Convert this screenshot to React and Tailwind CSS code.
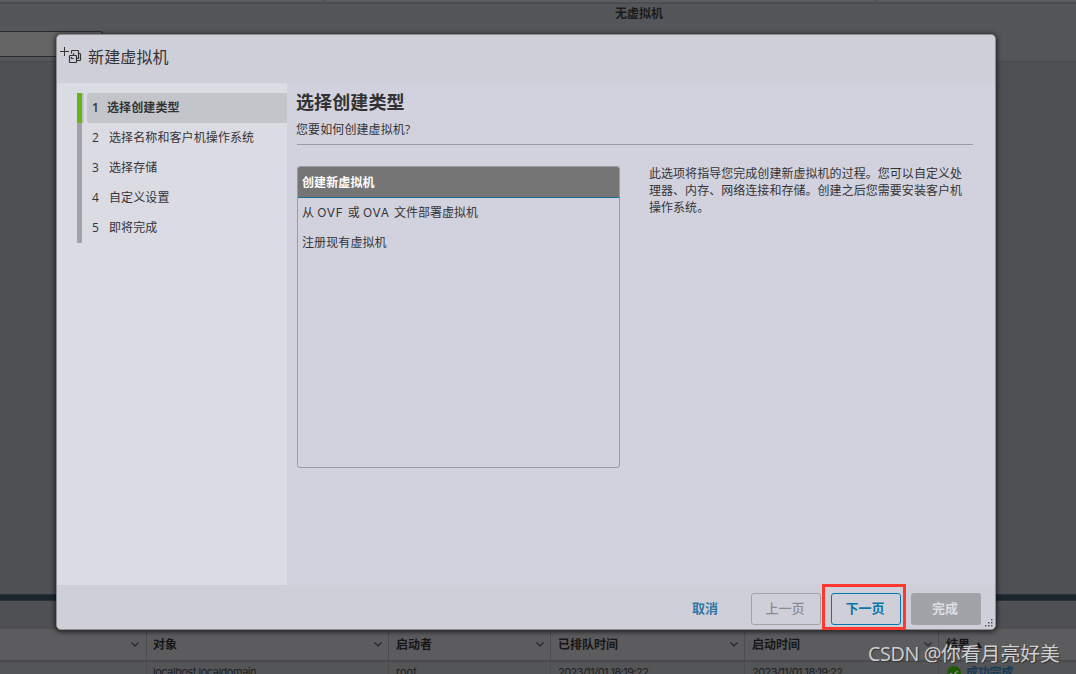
import React from 'react';

const steps = ['选择创建类型', '选择名称和客户机操作系统', '选择存储', '自定义设置', '即将完成'];

function Chevron() {
  return (
    <svg width="8" height="5" viewBox="0 0 8 5" className="shrink-0" fill="none" stroke="#252527" strokeWidth="1.1">
      <path d="M.5.5 4 4 7.500.5" />
    </svg>
  );
}

function HeaderCell({ label, className }) {
  return (
    <div className={`flex shrink-0 items-center justify-between border-r border-[#4d4d50] pr-[6px] text-[12px] font-bold text-[#161617] ${className}`}>
      <span>{label}</span>
      <Chevron />
    </div>
  );
}

function Cell({ children, className }) {
  return <div className={`shrink-0 border-r border-[#4d4d50] pt-[1px] font-[Inter] text-[11px] text-[#202022] ${className}`}>{children}</div>;
}

function Background() {
  return (
    <div className="flex h-[674px] w-[1076px] flex-col bg-[#4f5054]">
      <div className="flex h-[4px] shrink-0 border-b-2 border-[#4c4d51] bg-[#5b5c5f]">
        <div className="w-[324px] border-r border-[#49494d]" />
        <div className="w-[553px] border-r border-[#49494d]" />
      </div>
      <div className="flex h-[58px] shrink-0 flex-col border-b border-[#48494c] bg-[#555659]">
        <div className="flex h-[27px] shrink-0 pl-[615px] pt-[1px] text-[12px] font-bold leading-[18px] text-[#1b1b1c]">无虚拟机</div>
        <div className="h-[26px] w-[103px] shrink-0 rounded-tr-[3px] border border-l-0 border-[#2b2b2d] bg-[#656565]" />
      </div>
      <div className="h-[532px] shrink-0" />
      <div className="h-[7px] shrink-0 border-y border-[#29343a] bg-[#1a262c]" />
      <div className="h-[28px] shrink-0" />
      <div className="flex h-[33px] shrink-0 border-b-2 border-[#4b4b4d] bg-[#5c5c5e]">
        <HeaderCell label="" className="w-[147px] pr-[7px]" />
        <HeaderCell label="对象" className="w-[242px] pl-[6px]" />
        <HeaderCell label="启动者" className="w-[162px] pl-[7px]" />
        <HeaderCell label="已排队时间" className="w-[194px] pl-[7px]" />
        <HeaderCell label="启动时间" className="w-[194px] pl-[7px]" />
        <div className="flex items-center gap-[5px] pl-[7px] text-[12px] font-bold text-[#161617]">
          <span>结果</span>
          <svg width="7" height="6" viewBox="0 0 7 6"><path d="M3.500 0 7 6H0z" fill="#151516" /></svg>
        </div>
      </div>
      <div className="flex h-[12px] shrink-0 overflow-hidden bg-[#545557] leading-[18px]">
        <Cell className="w-[147px]" />
        <Cell className="w-[242px] pl-[6px] tracking-[-0.470px]">localhost.localdomain</Cell>
        <Cell className="w-[162px] pl-[7px]">root</Cell>
        <Cell className="w-[194px] pl-[7px] tracking-[-0.550px]">2023/11/01 18:19:22</Cell>
        <Cell className="w-[194px] pl-[7px] tracking-[-0.550px]">2023/11/01 18:19:22</Cell>
        <div className="flex items-start gap-[5px] pl-[8px] pt-[4px] text-[12px] font-bold text-[#173c57]">
          <svg width="14" height="14" viewBox="0 0 14 14" className="shrink-0">
            <circle cx="7" cy="7" r="7" fill="#1f5a08" />
            <path d="m3.500 7 2.500 2.500 4.500-4.500" fill="none" stroke="#8a908a" strokeWidth="1.300" />
          </svg>
          <span className="leading-[13px] tracking-[-0.200px]">成功完成</span>
        </div>
      </div>
    </div>
  );
}

function NewVmIcon() {
  return (
    <svg width="22" height="17" viewBox="0 0 22 17" className="shrink-0 overflow-visible" fill="none" stroke="#333336" strokeWidth="1.200">
      <path d="M-1 5.500h9M3.500 1v9" strokeWidth="1" />
      <rect x="8.500" y="9.500" width="7" height="7" rx="0.800" />
      <path d="M10.500 7.500V5.300c0-.5.300-.8.800-.8h5.400c.5 0 .8.300.8.800V12.500h-2M10.500 11v1.500h2" />
      <path d="M12.500 9V8.300c0-.5.300-.8.800-.8M17.500 7.500h1.200c.5 0 .8.300.8.800v5.400c0 .5-.3.800-.8.800h-3" />
    </svg>
  );
}

function Dialog() {
  return (
    <section className="absolute left-[56px] top-[34px] flex h-[596px] w-[940px] flex-col overflow-hidden rounded-[5px] border border-[#8e8e90] bg-[#d2d2de] shadow-[0_1px_5px_1px_rgba(0,0,0,0.650)]">
      <header className="flex h-[48px] shrink-0 items-start gap-[5px] bg-[#cfcfd9] pl-[4px] pt-[11px] text-[16px] leading-[23px] text-[#333335]">
        <NewVmIcon />
        <h1 className="tracking-[0.150px]">新建虚拟机</h1>
      </header>
      <div className="flex h-[502px] shrink-0">
        <aside className="w-[230px] shrink-0 bg-[#dbdbe4] pl-[20px] pt-[10px]">
          <ol className="text-[12px] text-[#343436]">
            {steps.map((label, index) => (
              <li key={label} className="flex h-[30px]">
                <div className={index === 0 ? 'w-[7px] border-l-[5px] border-[#62b515] bg-[#c2c2ca]' : 'w-[5px] bg-[#a2a2a7]'} />
                <div className={index === 0 ? 'ml-[3px] flex flex-1 items-center rounded-l-[3px] bg-[#c4c5ca] pl-[5px] font-bold' : 'ml-[5px] flex flex-1 items-center pl-[5px]'}>
                  <span className={index === 0 ? 'w-[15px] font-semibold' : 'w-[17px]'}>{index + 1}</span>
                  <span className="tracking-[0.100px]">{label}</span>
                </div>
              </li>
            ))}
          </ol>
        </aside>
        <main className="flex flex-1 flex-col pl-[10px] pr-[22px]">
          <div className="h-[62px] shrink-0 border-b border-[#9b9ba5]">
            <h2 className="-ml-px pt-[6px] text-[18px] font-bold leading-[26px] tracking-[0.100px] text-[#313131]">选择创建类型</h2>
            <p className="-ml-px pt-[6px] text-[12px] leading-[18px] tracking-[0.100px] text-[#343436]">您要如何创建虚拟机?</p>
          </div>
          <div className="flex pt-[21px] text-[12px] text-[#343436]">
            <div className="h-[302px] w-[323px] shrink-0 overflow-hidden rounded-[3px] border border-[#9a9aa3]">
              <div className="flex h-[31px] items-center border-b border-[#176d9a] bg-[#757575] pl-[4px] pt-px font-bold tracking-[0.100px] text-white">创建新虚拟机</div>
              <div className="flex h-[30px] items-center pl-[4px]">
                <span className="whitespace-pre">从 <span className="font-[Inter] tracking-[0.800px]">OVF </span>或 <span className="font-[Inter] tracking-[0.800px]">OVA </span>文件部署虚拟机</span>
              </div>
              <div className="flex h-[30px] items-center pl-[4px] tracking-[0.100px]">注册现有虚拟机</div>
            </div>
            <p className="-mt-px ml-[29px] w-[318px] shrink-0 leading-[17px] tracking-[0.040px]">此选项将指导您完成创建新虚拟机的过程。您可以自定义处理器、内存、网络连接和存储。创建之后您需要安装客户机操作系统。</p>
          </div>
        </main>
      </div>
      <footer className="flex h-[44px] shrink-0 items-start justify-end bg-[#cfcfd9] pr-[14px] pt-[8px] text-[13px] font-bold">
        <button className="mr-[33px] h-[32px] text-[#2f78a4]">取消</button>
        <button className="h-[32px] w-[70px] rounded-[3px] border border-[#a2a2a7] pr-[2px] font-medium text-[#89898e]">上一页</button>
        <button className="ml-[10px] h-[32px] w-[70px] rounded-[3px] border border-[#0876aa] pr-[2px] text-[#0876aa]">下一页</button>
        <button className="ml-[10px] h-[32px] w-[70px] rounded-[3px] bg-[#a2a3a8] pr-[2px] text-[#dddde3]">完成</button>
      </footer>
      <svg width="9" height="9" viewBox="0 0 9 9" className="absolute bottom-[1px] right-[1px]" fill="#55555b">
        <path d="M6 0h1.500v1.500H6zM3 3h1.500v1.500H3zM6 3h1.500v1.500H6zM0 6h1.500v1.500H0zM3 6h1.500v1.500H3zM6 6h1.500v1.500H6z" />
      </svg>
    </section>
  );
}

export default function App() {
  return (
    <div className="relative h-[674px] w-[1076px] overflow-hidden font-['Open_Sans','Noto_Sans_CJK_SC',sans-serif]">
      <Background />
      <Dialog />
      <div className="absolute left-[822px] top-[584px] h-[46px] w-[84px] border-[3px] border-[#ff3930]" />
      <div className="absolute left-[868px] top-[639px] whitespace-nowrap text-[19.800px] leading-[29px] text-[#d0d0d2] [text-shadow:1px_1px_1px_#333]"><span className="tracking-[-0.400px]">CSDN @</span>你看月亮好美</div>
    </div>
  );
}
